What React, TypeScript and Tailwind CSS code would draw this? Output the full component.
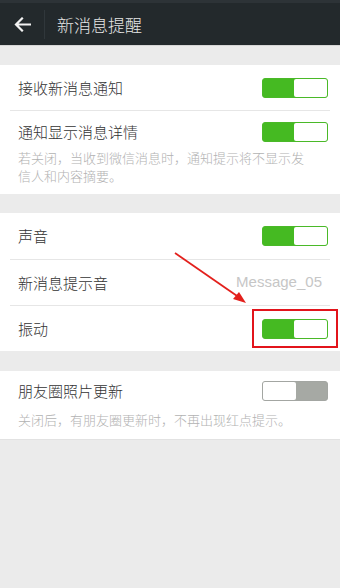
import React from "react";

const font = { fontFamily: '"Noto Sans CJK SC", "Noto Sans", sans-serif' };

function Toggle({ on }: { on: boolean }) {
  if (on) {
    return (
      <div className="flex h-[20px] w-[66px] shrink-0 justify-end rounded-[3px] border border-[#4ab928] bg-[#45ba22]">
        <div className="h-full w-[33px] rounded-[2px] bg-white" />
      </div>
    );
  }
  return (
    <div className="flex h-[20px] w-[66px] shrink-0 justify-start rounded-[3px] border border-[#a3a6a2] bg-[#a6a9a4]">
      <div className="h-full w-[33px] rounded-[2px] bg-white" />
    </div>
  );
}

function Divider() {
  return <div className="mx-[10px] h-px bg-[#e6e6e6]" />;
}

const label = "text-[15px] leading-[20px] font-light text-[#333333]";

export default function App() {
  return (
    <div className="relative h-[588px] w-[340px] overflow-hidden bg-[#ebebeb]" style={font}>
      {/* Header */}
      <div className="flex h-[45px] items-center border-t-[3px] border-[#2d3337] bg-[#23292c]">
        <div className="flex w-[44px] items-center justify-center">
          <svg width="17" height="15" viewBox="0 0 17 15" fill="none">
            <path d="M16 7.5H2.5M8 1.5L2 7.5L8 13.5" stroke="#f2f2f2" strokeWidth="2.2" strokeLinecap="square" />
          </svg>
        </div>
        <div className="h-[29px] w-px bg-[#30373b]" />
        <div className="ml-[12px] text-[17px] font-light leading-none text-[#e6e6e6]">新消息提醒</div>
      </div>
      <div className="h-px bg-[#d6d6d6]" />

      {/* Section 1 */}
      <div className="mt-[19px] bg-white">
        <div className="flex h-[45px] items-center justify-between pl-[18px] pr-[12px]">
          <span className={label}>接收新消息通知</span>
          <Toggle on />
        </div>
        <Divider />
        <div className="flex items-center justify-between pl-[18px] pr-[12px] pt-[11px]">
          <span className={label}>通知显示消息详情</span>
          <Toggle on />
        </div>
        <div className="pb-[9px] pl-[18px] pr-[24px] pt-[7px] text-[13px] font-light leading-[18px] text-[#b2b2b2]">
          若关闭，当收到微信消息时，通知提示将不显示发信人和内容摘要。
        </div>
      </div>

      {/* Section 2 */}
      <div className="mt-[19px] bg-white">
        <div className="flex h-[46px] items-center justify-between pl-[18px] pr-[12px]">
          <span className={label}>声音</span>
          <Toggle on />
        </div>
        <Divider />
        <div className="flex h-[45px] items-center justify-between pl-[18px] pr-[18px]">
          <span className={label}>新消息提示音</span>
          <span className="text-[15px] text-[#c6c6c6]" style={{ fontFamily: '"Liberation Sans", Arial, sans-serif' }}>
            Message_05
          </span>
        </div>
        <Divider />
        <div className="flex h-[45px] items-center justify-between pl-[18px] pr-[12px]">
          <span className={label}>振动</span>
          <Toggle on />
        </div>
      </div>

      {/* Section 3 */}
      <div className="mt-[20px] bg-white">
        <div className="flex items-center justify-between pl-[18px] pr-[12px] pt-[10px]">
          <span className={label}>朋友圈照片更新</span>
          <Toggle on={false} />
        </div>
        <div className="pb-[10px] pl-[18px] pr-[12px] pt-[10px] text-[13px] font-light leading-[18px] text-[#b2b2b2]">
          关闭后，有朋友圈更新时，不再出现红点提示。
        </div>
      </div>
      <div className="h-px bg-[#e2e2e2]" />

      {/* Annotation overlay */}
      <svg className="pointer-events-none absolute left-0 top-0" width="340" height="588">
        <line x1="175" y1="253" x2="240" y2="298" stroke="#e3201c" strokeWidth="1.8" />
        <polygon points="246,303 233,299 239,292" fill="#e3201c" />
      </svg>
      <div className="pointer-events-none absolute left-[252px] top-[309px] h-[39px] w-[86px] border-2 border-[#e2141b]" />
    </div>
  );
}
